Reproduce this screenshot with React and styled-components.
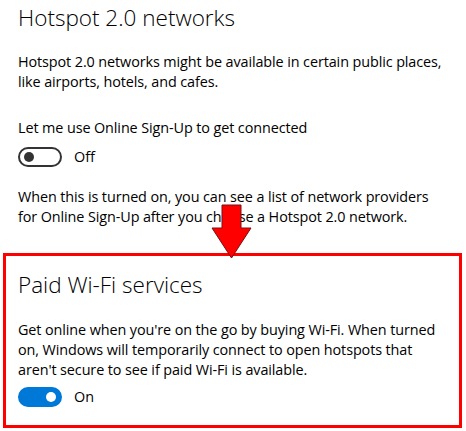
import styled, { createGlobalStyle } from 'styled-components';

const GlobalStyle = createGlobalStyle`
  html, body {
    margin: 0;
    padding: 0;
    background: #ffffff;
  }
  body {
    font-family: "Open Sans", "Noto Sans", sans-serif;
    color: #000000;
  }
`;

const Page = styled.div`
  position: relative;
  width: 466px;
  height: 431px;
  overflow: hidden;
  background: #ffffff;
`;

const Section = styled.div`
  display: flex;
  flex-direction: column;
  padding: 2px 0 0 18px;
`;

const Highlight = styled.div`
  display: flex;
  flex-direction: column;
  margin: 26px 4px 0 3px;
  padding: 13px 12px 18px 12px;
  border: 3px solid #ff0000;
`;

const Title = styled.h2`
  margin: 0;
  font-size: 22.5px;
  font-weight: 300;
  line-height: 32px;
  color: #000000;
  white-space: nowrap;
`;

const Text = styled.p`
  margin: ${(p) => p.$top || 0}px 0 0 0;
  font-size: 14.4px;
  line-height: 20px;
  letter-spacing: -0.1px;
  color: #000000;
  white-space: nowrap;
`;

const ToggleRow = styled.div`
  display: flex;
  align-items: center;
  gap: 12px;
  margin-top: ${(p) => p.$top || 0}px;
  height: 20px;
`;

const Track = styled.div`
  box-sizing: border-box;
  width: 44px;
  height: 20px;
  border-radius: 10px;
  display: flex;
  align-items: center;
  justify-content: ${(p) => (p.$on ? 'flex-end' : 'flex-start')};
  padding: 0 4px;
  background: ${(p) => (p.$on ? '#0078d7' : '#ffffff')};
  border: 2px solid ${(p) => (p.$on ? '#0078d7' : '#333333')};
`;

const Knob = styled.span`
  width: 10px;
  height: 10px;
  border-radius: 50%;
  background: ${(p) => (p.$on ? '#ffffff' : '#333333')};
`;

const ToggleLabel = styled.span`
  font-size: 14.4px;
  line-height: 20px;
  color: #000000;
`;

const ArrowMark = styled.svg`
  position: absolute;
  left: 211px;
  top: 204px;
`;

const Toggle = ({ on, label }) => (
  <>
    <Track $on={on}>
      <Knob $on={on} />
    </Track>
    <ToggleLabel>{label}</ToggleLabel>
  </>
);

export default function App() {
  return (
    <Page>
      <GlobalStyle />
      <Section>
        <Title>Hotspot 2.0 networks</Title>
        <Text $top={18}>
          Hotspot 2.0 networks might be available in certain public places,
          <br />
          like airports, hotels, and cafes.
        </Text>
        <Text $top={26}>Let me use Online Sign-Up to get connected</Text>
        <ToggleRow $top={9}>
          <Toggle on={false} label="Off" />
        </ToggleRow>
        <Text $top={20}>
          When this is turned on, you can see a list of network providers
          <br />
          for Online Sign-Up after you choose a Hotspot 2.0 network.
        </Text>
      </Section>
      <Highlight>
        <Title>Paid Wi-Fi services</Title>
        <Text $top={19}>
          Get online when you're on the go by buying Wi-Fi. When turned
          <br />
          on, Windows will temporarily connect to open hotspots that
          <br />
          aren't secure to see if paid Wi-Fi is available.
        </Text>
        <ToggleRow $top={7}>
          <Toggle on label="On" />
        </ToggleRow>
      </Highlight>
      <ArrowMark width="42" height="56" viewBox="0 0 42 56">
        <polygon
          points="11,1 30,1 30,24 40,24 20.5,54 1,24 11,24"
          fill="#ff0000"
          stroke="#7a1010"
          strokeWidth="1"
        />
      </ArrowMark>
    </Page>
  );
}
